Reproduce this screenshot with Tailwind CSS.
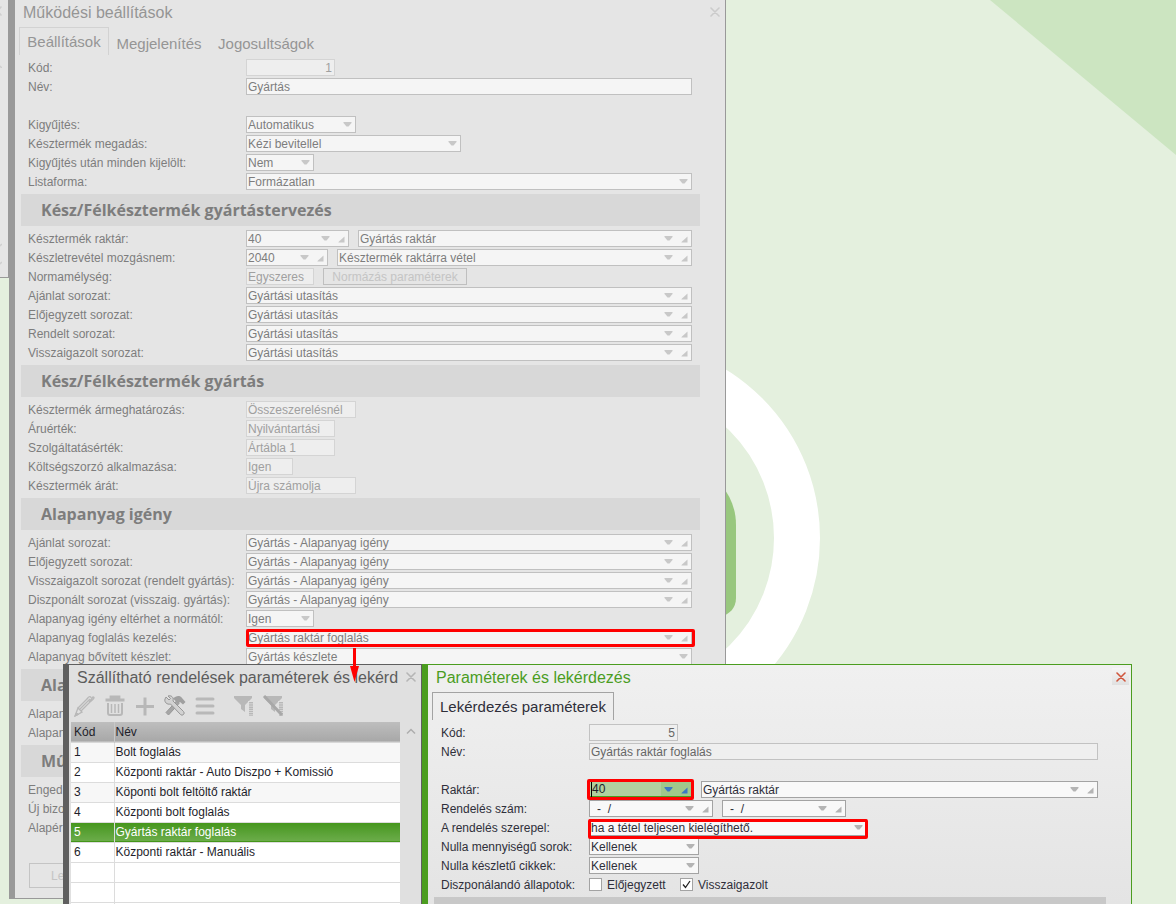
<!DOCTYPE html>
<html lang="hu">
<head>
<meta charset="utf-8">
<title>Működési beállítások</title>
<script src="https://cdn.jsdelivr.net/npm/@tailwindcss/browser@4"></script>
</head>
<body class="relative h-screen overflow-hidden bg-[#e4f0de] font-['Liberation_Sans',Arial,sans-serif] text-xs leading-4">

<!-- Icon sprite -->
<svg class="hidden" aria-hidden="true">
  <symbol id="down" viewBox="0 0 9 5"><path d="M0.500 0H8.500V1L5.500 4.500H3.500L0.500 1Z" fill="currentColor"/></symbol>
  <symbol id="corner" viewBox="0 0 7 7"><path d="M6.500 0.500V6.500H0.500V6Z" fill="currentColor"/></symbol>
  <symbol id="close" viewBox="0 0 10 10"><path d="M1 1L9 9M9 1L1 9" fill="none" stroke="currentColor" stroke-width="1.600" stroke-linecap="round"/></symbol>
</svg>

<!-- Wallpaper -->
<svg class="absolute top-0 left-0" width="1176" height="904" aria-hidden="true">
  <path d="M990 0H1176V155Z" fill="#cce5c1"/>
  <circle cx="622" cy="538" r="175" fill="none" stroke="#fff" stroke-width="46"/>
  <path d="M700 470C722 480 736 500 736 525V598C736 608 730 614 720 617H700Z" fill="#98c77e"/>
</svg>

<!-- Window behind, mostly off screen -->
<div class="absolute top-0 left-0 h-[278px] w-[9px] overflow-hidden border-r border-b border-[#999] bg-[#e5e5e5] text-[#cfcfcf]">
  <svg class="absolute top-1.5 -left-2" width="10" height="10"><use href="#close"/></svg>
  <svg class="absolute top-[63px] -left-[7px]" width="9" height="5" viewBox="0 0 9 5"><path d="M0 5L4.500 1L9 5" fill="none" stroke="currentColor" stroke-width="1.500"/></svg>
  <svg class="absolute top-[243px] -left-[7px]" width="9" height="5" viewBox="0 0 9 5"><path d="M0 5L4.500 5L9 1" fill="none" stroke="currentColor" stroke-width="1.500"/></svg>
  <svg class="absolute top-[261px] -left-[7px]" width="9" height="5" viewBox="0 0 9 5"><path d="M0 5L4.500 5L9 1" fill="none" stroke="currentColor" stroke-width="1.500"/></svg>
</div>

<!-- Main settings window -->
<section class="absolute -top-px left-[9px] w-[717px] overflow-hidden border border-l-6 border-[#999] bg-[#e5e5e5] pb-2.5 text-[#7d7d7d]">
  <header class="flex h-[27px] items-center justify-between pr-[5px] pb-0.5 pl-2">
    <h1 class="text-base text-[#959595]">Működési beállítások</h1>
    <button class="mb-0.5 text-[#cbcbcb]" aria-label="Bezárás"><svg width="10" height="10"><use href="#close"/></svg></button>
  </header>
  <nav class="mb-[3px] ml-1 flex h-7 text-[15px] text-[#959595]">
    <button class="w-[90px] border border-b-0 border-[#d2d2d2] whitespace-nowrap">Beállítások</button>
    <button class="w-[100px] pt-1.5 whitespace-nowrap">Megjelenítés</button>
    <button class="w-[114px] pt-1.5 whitespace-nowrap">Jogosultságok</button>
  </nav>
  <form class="pr-[25px] pl-1.5">
    <div class="flex h-[19px] items-center pr-2 pl-[7px]"><label for="kod" class="w-[218px]">Kód:</label>
      <input id="kod" value="1" disabled class="h-[17px] w-[89px] border border-[#d4d4d4] bg-[#eeeeee] px-0.5 text-right text-[#a0a0a0]"></div>
    <div class="mb-[19px] flex h-[19px] items-center pr-2 pl-[7px]"><label for="nev" class="w-[218px]">Név:</label>
      <input id="nev" value="Gyártás" class="h-[17px] min-w-0 flex-1 border border-[#c0c0c0] bg-[#f5f5f5] px-px"></div>
    <div class="flex h-[19px] items-center pr-2 pl-[7px]"><label for="kigy" class="w-[218px]">Kigyűjtés:</label>
      <div class="flex h-[17px] w-[110px] items-center border border-[#c0c0c0] bg-[#f5f5f5] pr-[3px] pl-px"><select id="kigy" class="min-w-0 flex-1 appearance-none"><option>Automatikus</option></select><svg class="text-[#c8c8c8]" width="9" height="5"><use href="#down"/></svg></div></div>
    <div class="flex h-[19px] items-center pr-2 pl-[7px]"><label for="megadas" class="w-[218px]">Késztermék megadás:</label>
      <div class="flex h-[17px] w-[215px] items-center border border-[#c0c0c0] bg-[#f5f5f5] pr-[3px] pl-px"><select id="megadas" class="min-w-0 flex-1 appearance-none"><option>Kézi bevitellel</option></select><svg class="text-[#c8c8c8]" width="9" height="5"><use href="#down"/></svg></div></div>
    <div class="flex h-[19px] items-center pr-2 pl-[7px]"><label for="kijelolt" class="w-[218px]">Kigyűjtés után minden kijelölt:</label>
      <div class="flex h-[17px] w-[68px] items-center border border-[#c0c0c0] bg-[#f5f5f5] pr-[3px] pl-px"><select id="kijelolt" class="min-w-0 flex-1 appearance-none"><option>Nem</option></select><svg class="text-[#c8c8c8]" width="9" height="5"><use href="#down"/></svg></div></div>
    <div class="flex h-[19px] items-center pr-2 pl-[7px]"><label for="lista" class="w-[218px]">Listaforma:</label>
      <div class="flex h-[17px] flex-1 items-center border border-[#c0c0c0] bg-[#f5f5f5] pr-[3px] pl-px"><select id="lista" class="min-w-0 flex-1 appearance-none"><option>Formázatlan</option></select><svg class="text-[#c8c8c8]" width="9" height="5"><use href="#down"/></svg></div></div>

    <h2 class="my-[3px] flex h-8 items-center bg-[#d8d8d8] pl-5 font-['Open_Sans',sans-serif] text-base font-bold">Kész/Félkésztermék gyártástervezés</h2>
    <div class="flex h-[19px] items-center pr-2 pl-[7px]"><label for="raktar" class="w-[218px]">Késztermék raktár:</label>
      <div class="flex h-[17px] w-[103px] items-center gap-2 border border-[#c0c0c0] bg-[#f5f5f5] pr-[3px] pl-px text-[#c8c8c8]"><input id="raktar" value="40" class="min-w-0 flex-1 text-[#7d7d7d]"><svg width="9" height="5"><use href="#down"/></svg><svg class="mt-0.5" width="7" height="7"><use href="#corner"/></svg></div>
      <div class="ml-[9px] flex h-[17px] flex-1 items-center gap-2 border border-[#c0c0c0] bg-[#f5f5f5] pr-[3px] pl-px text-[#c8c8c8]"><input aria-label="Késztermék raktár neve" value="Gyártás raktár" class="min-w-0 flex-1 text-[#7d7d7d]"><svg width="9" height="5"><use href="#down"/></svg><svg class="mt-0.5" width="7" height="7"><use href="#corner"/></svg></div></div>
    <div class="flex h-[19px] items-center pr-2 pl-[7px]"><label for="mozgas" class="w-[218px]">Készletrevétel mozgásnem:</label>
      <div class="flex h-[17px] w-[82px] items-center gap-2 border border-[#c0c0c0] bg-[#f5f5f5] pr-[3px] pl-px text-[#c8c8c8]"><input id="mozgas" value="2040" class="min-w-0 flex-1 text-[#7d7d7d]"><svg width="9" height="5"><use href="#down"/></svg><svg class="mt-0.5" width="7" height="7"><use href="#corner"/></svg></div>
      <div class="ml-[9px] flex h-[17px] flex-1 items-center gap-2 border border-[#c0c0c0] bg-[#f5f5f5] pr-[3px] pl-px text-[#c8c8c8]"><input aria-label="Mozgásnem neve" value="Késztermék raktárra vétel" class="min-w-0 flex-1 text-[#7d7d7d]"><svg width="9" height="5"><use href="#down"/></svg><svg class="mt-0.5" width="7" height="7"><use href="#corner"/></svg></div></div>
    <div class="flex h-[19px] items-center pr-2 pl-[7px]"><label for="norma" class="w-[218px]">Normamélység:</label>
      <input id="norma" value="Egyszeres" disabled class="h-[17px] w-[68px] border border-[#d4d4d4] bg-[#eeeeee] px-px text-[#a0a0a0]">
      <button type="button" disabled class="ml-[9px] h-[17px] w-36 border border-[#bfbfbf] bg-[#e5e5e5] leading-none whitespace-nowrap text-[#c4c4c4]">Normázás paraméterek</button></div>
    <div class="flex h-[19px] items-center pr-2 pl-[7px]"><label for="s1" class="w-[218px]">Ajánlat sorozat:</label>
      <div class="flex h-[17px] flex-1 items-center gap-2 border border-[#c0c0c0] bg-[#f5f5f5] pr-[3px] pl-px text-[#c8c8c8]"><input id="s1" value="Gyártási utasítás" class="min-w-0 flex-1 text-[#7d7d7d]"><svg width="9" height="5"><use href="#down"/></svg><svg class="mt-0.5" width="7" height="7"><use href="#corner"/></svg></div></div>
    <div class="flex h-[19px] items-center pr-2 pl-[7px]"><label for="s2" class="w-[218px]">Előjegyzett sorozat:</label>
      <div class="flex h-[17px] flex-1 items-center gap-2 border border-[#c0c0c0] bg-[#f5f5f5] pr-[3px] pl-px text-[#c8c8c8]"><input id="s2" value="Gyártási utasítás" class="min-w-0 flex-1 text-[#7d7d7d]"><svg width="9" height="5"><use href="#down"/></svg><svg class="mt-0.5" width="7" height="7"><use href="#corner"/></svg></div></div>
    <div class="flex h-[19px] items-center pr-2 pl-[7px]"><label for="s3" class="w-[218px]">Rendelt sorozat:</label>
      <div class="flex h-[17px] flex-1 items-center gap-2 border border-[#c0c0c0] bg-[#f5f5f5] pr-[3px] pl-px text-[#c8c8c8]"><input id="s3" value="Gyártási utasítás" class="min-w-0 flex-1 text-[#7d7d7d]"><svg width="9" height="5"><use href="#down"/></svg><svg class="mt-0.5" width="7" height="7"><use href="#corner"/></svg></div></div>
    <div class="flex h-[19px] items-center pr-2 pl-[7px]"><label for="s4" class="w-[218px]">Visszaigazolt sorozat:</label>
      <div class="flex h-[17px] flex-1 items-center gap-2 border border-[#c0c0c0] bg-[#f5f5f5] pr-[3px] pl-px text-[#c8c8c8]"><input id="s4" value="Gyártási utasítás" class="min-w-0 flex-1 text-[#7d7d7d]"><svg width="9" height="5"><use href="#down"/></svg><svg class="mt-0.5" width="7" height="7"><use href="#corner"/></svg></div></div>

    <h2 class="my-[3px] flex h-8 items-center bg-[#d8d8d8] pl-5 font-['Open_Sans',sans-serif] text-base font-bold">Kész/Félkésztermék gyártás</h2>
    <div class="flex h-[19px] items-center pr-2 pl-[7px]"><label for="armeg" class="w-[218px]">Késztermék ármeghatározás:</label>
      <input id="armeg" value="Összeszerelésnél" disabled class="h-[17px] w-[110px] border border-[#d4d4d4] bg-[#eeeeee] px-px text-[#a0a0a0]"></div>
    <div class="flex h-[19px] items-center pr-2 pl-[7px]"><label for="aru" class="w-[218px]">Áruérték:</label>
      <input id="aru" value="Nyilvántartási" disabled class="h-[17px] w-[89px] border border-[#d4d4d4] bg-[#eeeeee] px-px text-[#a0a0a0]"></div>
    <div class="flex h-[19px] items-center pr-2 pl-[7px]"><label for="szolg" class="w-[218px]">Szolgáltatásérték:</label>
      <input id="szolg" value="Ártábla 1" disabled class="h-[17px] w-[89px] border border-[#d4d4d4] bg-[#eeeeee] px-px text-[#a0a0a0]"></div>
    <div class="flex h-[19px] items-center pr-2 pl-[7px]"><label for="szorzo" class="w-[218px]">Költségszorzó alkalmazása:</label>
      <input id="szorzo" value="Igen" disabled class="h-[17px] w-[47px] border border-[#d4d4d4] bg-[#eeeeee] px-px text-[#a0a0a0]"></div>
    <div class="flex h-[19px] items-center pr-2 pl-[7px]"><label for="arat" class="w-[218px]">Késztermék árát:</label>
      <input id="arat" value="Újra számolja" disabled class="h-[17px] w-[110px] border border-[#d4d4d4] bg-[#eeeeee] px-px text-[#a0a0a0]"></div>

    <h2 class="my-[3px] flex h-8 items-center bg-[#d8d8d8] pl-5 font-['Open_Sans',sans-serif] text-base font-bold">Alapanyag igény</h2>
    <div class="flex h-[19px] items-center pr-2 pl-[7px]"><label for="a1" class="w-[218px]">Ajánlat sorozat:</label>
      <div class="flex h-[17px] flex-1 items-center gap-2 border border-[#c0c0c0] bg-[#f5f5f5] pr-[3px] pl-px text-[#c8c8c8]"><input id="a1" value="Gyártás - Alapanyag igény" class="min-w-0 flex-1 text-[#7d7d7d]"><svg width="9" height="5"><use href="#down"/></svg><svg class="mt-0.5" width="7" height="7"><use href="#corner"/></svg></div></div>
    <div class="flex h-[19px] items-center pr-2 pl-[7px]"><label for="a2" class="w-[218px]">Előjegyzett sorozat:</label>
      <div class="flex h-[17px] flex-1 items-center gap-2 border border-[#c0c0c0] bg-[#f5f5f5] pr-[3px] pl-px text-[#c8c8c8]"><input id="a2" value="Gyártás - Alapanyag igény" class="min-w-0 flex-1 text-[#7d7d7d]"><svg width="9" height="5"><use href="#down"/></svg><svg class="mt-0.5" width="7" height="7"><use href="#corner"/></svg></div></div>
    <div class="flex h-[19px] items-center pr-2 pl-[7px]"><label for="a3" class="w-[218px] whitespace-nowrap">Visszaigazolt sorozat (rendelt gyártás):</label>
      <div class="flex h-[17px] flex-1 items-center gap-2 border border-[#c0c0c0] bg-[#f5f5f5] pr-[3px] pl-px text-[#c8c8c8]"><input id="a3" value="Gyártás - Alapanyag igény" class="min-w-0 flex-1 text-[#7d7d7d]"><svg width="9" height="5"><use href="#down"/></svg><svg class="mt-0.5" width="7" height="7"><use href="#corner"/></svg></div></div>
    <div class="flex h-[19px] items-center pr-2 pl-[7px]"><label for="a4" class="w-[218px] whitespace-nowrap">Diszponált sorozat (visszaig. gyártás):</label>
      <div class="flex h-[17px] flex-1 items-center gap-2 border border-[#c0c0c0] bg-[#f5f5f5] pr-[3px] pl-px text-[#c8c8c8]"><input id="a4" value="Gyártás - Alapanyag igény" class="min-w-0 flex-1 text-[#7d7d7d]"><svg width="9" height="5"><use href="#down"/></svg><svg class="mt-0.5" width="7" height="7"><use href="#corner"/></svg></div></div>
    <div class="flex h-[19px] items-center pr-2 pl-[7px]"><label for="a5" class="w-[218px] whitespace-nowrap">Alapanyag igény eltérhet a normától:</label>
      <div class="flex h-[17px] w-[68px] items-center border border-[#c0c0c0] bg-[#f5f5f5] pr-[3px] pl-px"><select id="a5" class="min-w-0 flex-1 appearance-none"><option>Igen</option></select><svg class="text-[#c8c8c8]" width="9" height="5"><use href="#down"/></svg></div></div>
    <div class="flex h-[19px] items-center pr-2 pl-[7px]"><label for="a6" class="w-[218px]">Alapanyag foglalás kezelés:</label>
      <div class="relative flex h-[17px] flex-1 items-center gap-2 border border-[#c0c0c0] bg-[#f5f5f5] pr-[3px] pl-px text-[#c8c8c8]"><input id="a6" value="Gyártás raktár foglalás" class="min-w-0 flex-1 text-[#7d7d7d]"><svg width="9" height="5"><use href="#down"/></svg><svg class="mt-0.5" width="7" height="7"><use href="#corner"/></svg>
        <div class="pointer-events-none absolute -top-px -right-1 -bottom-0.5 -left-px rounded-xs border-3 border-[#f00]"></div></div></div>
    <div class="flex h-[19px] items-center pr-2 pl-[7px]"><label for="a7" class="w-[218px]">Alapanyag bővített készlet:</label>
      <div class="flex h-[17px] flex-1 items-center border border-[#c0c0c0] bg-[#f5f5f5] pr-[3px] pl-px"><select id="a7" class="min-w-0 flex-1 appearance-none"><option>Gyártás készlete</option></select><svg class="text-[#c8c8c8]" width="9" height="5"><use href="#down"/></svg></div></div>

    <h2 class="my-[3px] flex h-8 items-center bg-[#d8d8d8] pl-5 font-['Open_Sans',sans-serif] text-base font-bold">Ala</h2>
    <p class="flex h-[19px] items-center pl-[7px]">Alapan</p>
    <p class="flex h-[19px] items-center pl-[7px]">Alapan</p>
    <h2 class="my-[3px] flex h-8 items-center bg-[#d8d8d8] pl-5 font-['Open_Sans',sans-serif] text-base font-bold">Mű</h2>
    <p class="flex h-[19px] items-center pl-[7px]">Enged</p>
    <p class="flex h-[19px] items-center pl-[7px]">Új bizo</p>
    <p class="flex h-[19px] items-center pl-[7px]">Alapér</p>
    <button type="button" disabled class="mt-[26px] ml-2 block h-[25px] w-24 border border-[#c4c4c4] pl-[21px] text-left text-[#c4c4c4]">Le</button>
  </form>
</section>

<!-- List window -->
<section class="absolute top-[664px] bottom-0 left-[63px] w-[359px] overflow-hidden border border-b-0 border-l-6 border-[#5f5f5f] bg-[#e0e0e0] text-[#1e1e2a]">
  <header class="flex h-[27px] items-center justify-between gap-2 pr-[5px] pb-0.5 pl-2">
    <h1 class="min-w-0 flex-1 overflow-hidden text-base whitespace-nowrap text-[#5c5c5c]">Szállítható rendelések paraméterek és lekérdezés</h1>
    <button class="mb-0.5 text-[#b5b5b5]" aria-label="Bezárás"><svg width="10" height="10"><use href="#close"/></svg></button>
  </header>
  <div class="flex h-[30px] items-center gap-2 pb-0.5 pl-[5px] text-[#b8b8b8]">
    <button aria-label="Szerkesztés"><svg width="22" height="22" viewBox="0 0 22 22" fill="none" stroke="currentColor"><path d="M4 13L14 3M7 16L18 5M5.500 14.500L16 4" stroke-width="1.300"/><path d="M13 4C15 1 17 1 17 3M17 6C20 4 21 2 19 2L15 7" stroke-width="1.300"/><path d="M1 21L4 13L8 17Z" stroke-width="1.300"/><path d="M1 21L2.500 17.500L4.500 19.500Z" fill="currentColor"/></svg></button>
    <button aria-label="Törlés"><svg width="22" height="22" viewBox="0 0 22 22" fill="none" stroke="currentColor"><path d="M1.500 5H20.500M7 3.500V2H15V3.500" stroke-width="2.800"/><path d="M4 8V18Q4 20 6 20H16Q18 20 18 18V8" stroke-width="2"/><path d="M7.500 9V18M11 9V18M14.500 9V18" stroke-width="1.500"/></svg></button>
    <button aria-label="Új"><svg width="22" height="22" viewBox="0 0 22 22" fill="none" stroke="currentColor" stroke-width="3"><path d="M2 11.500H20M11 2.500V20.500"/></svg></button>
    <button aria-label="Eszközök" class="text-[#a6a6a6]"><svg width="22" height="22" viewBox="0 0 22 22"><path d="M12.500 6L2 17.500L4.500 20L15 8.500Z" fill="#a6a6a6" stroke="#989898"/><path d="M9 3.500C12 0.500 16 0 18 3L21.500 7L19 9.500L16 7L14 9L11 5.500Z" fill="#a0a0a0"/><path d="M2 2L5 5L6.500 3.500L4 1C7 0 10 2 9 6L19.500 16.500Q21 18 19.500 19.500Q18 21 16.500 19.500L6.500 9C3 10 0 7 1 4Z" fill="#d2d2d2" stroke="#979797"/></svg></button>
    <button aria-label="Menü"><svg width="22" height="22" viewBox="0 0 22 22" fill="none" stroke="currentColor" stroke-width="3" stroke-linecap="round"><path d="M3 4H19M3 11H19M3 18H19"/></svg></button>
    <button aria-label="Szűrő" class="ml-2"><svg width="22" height="22" viewBox="0 0 22 22"><path d="M2 1H20V3L13 10V17L9 14V10L2 3Z" fill="currentColor"/><path d="M19 6V21" stroke="#e0e0e0" stroke-width="6"/><path d="M19 7V21" stroke="currentColor" stroke-width="4" stroke-dasharray="1.500 0.700"/></svg></button>
    <button aria-label="Szűrő törlése"><svg width="22" height="22" viewBox="0 0 22 22"><path d="M2 1H20V3L13 10V17L9 14V10L2 3Z" fill="currentColor"/><path d="M19 6V21" stroke="#e0e0e0" stroke-width="6"/><path d="M19 7V21" stroke="currentColor" stroke-width="4" stroke-dasharray="1.500 0.700"/><path d="M2 1L20 20" stroke="#a8a8a8" stroke-width="3"/></svg></button>
  </div>
  <div class="flex">
    <table class="ml-0.5 min-w-0 flex-1 table-fixed border-collapse bg-white text-left">
      <thead><tr class="h-5 border-b border-[#d8d8d8] bg-linear-to-b from-[#bebebe] to-[#a8a8a8]"><th class="w-[43px] border-r border-[#c8c8c8] p-0 pl-[3px] font-normal">Kód</th><th class="p-0 pl-px font-normal">Név</th></tr></thead>
      <tbody>
        <tr class="h-5 border-b border-[#dcdcdc] bg-[#f7f7f7]"><td class="border-r border-[#dcdcdc] p-0 pl-[3px]">1</td><td class="p-0 pl-px">Bolt foglalás</td></tr>
        <tr class="h-5 border-b border-[#dcdcdc]"><td class="border-r border-[#dcdcdc] p-0 pl-[3px]">2</td><td class="p-0 pl-px">Központi raktár - Auto Diszpo + Komissió</td></tr>
        <tr class="h-5 border-b border-[#dcdcdc] bg-[#f7f7f7]"><td class="border-r border-[#dcdcdc] p-0 pl-[3px]">3</td><td class="p-0 pl-px">Köponti bolt feltöltő raktár</td></tr>
        <tr class="h-5 border-b border-[#dcdcdc]"><td class="border-r border-[#dcdcdc] p-0 pl-[3px]">4</td><td class="p-0 pl-px">Központi bolt foglalás</td></tr>
        <tr class="h-5 border-b border-[#dcdcdc] bg-linear-to-b from-[#439517] to-[#6bac49] text-white"><td class="border-r border-[#dcdcdc] p-0 pl-[3px]">5</td><td class="p-0 pl-px">Gyártás raktár foglalás</td></tr>
        <tr class="h-5 border-b border-[#dcdcdc]"><td class="border-r border-[#dcdcdc] p-0 pl-[3px]">6</td><td class="p-0 pl-px">Központi raktár - Manuális</td></tr>
        <tr class="h-5 border-b border-[#dcdcdc]"><td class="border-r border-[#dcdcdc] p-0"></td><td class="p-0"></td></tr>
        <tr class="h-5 border-b border-[#dcdcdc]"><td class="border-r border-[#dcdcdc] p-0"></td><td class="p-0"></td></tr>
        <tr class="h-5 border-b border-[#dcdcdc]"><td class="border-r border-[#dcdcdc] p-0"></td><td class="p-0"></td></tr>
      </tbody>
    </table>
    <div class="flex w-[21px] justify-center pt-1.5"><svg width="10" height="6" viewBox="0 0 10 6"><path d="M1 5.500L5 1.500L9 5.500" fill="none" stroke="#aeaeae" stroke-width="1.500"/></svg></div>
  </div>
</section>

<!-- Parameters window -->
<section class="absolute top-[664px] bottom-0 left-[422px] w-[710px] overflow-hidden border border-b-0 border-l-6 border-[#4b9d1f] bg-linear-to-b from-[#f0f0f0] to-[#e4e4e4] text-[#2f2f3a]">
  <header class="flex h-[27px] items-center justify-between pr-0.5 pb-0.5 pl-2">
    <h1 class="text-base text-[#4b9d1f]">Paraméterek és lekérdezés</h1>
    <button class="mb-0.5 flex size-[17px] items-center justify-center bg-linear-to-b from-[#f5f5f5] to-[#e0e0e0] text-[#d0553c]" aria-label="Bezárás"><svg width="10" height="10"><use href="#close"/></svg></button>
  </header>
  <nav class="mb-[3px] ml-1 flex h-7 text-[15px]">
    <button class="w-[182px] border border-b-0 border-[#a3a3a3] whitespace-nowrap">Lekérdezés paraméterek</button>
  </nav>
  <form class="pr-[25px] pl-1.5">
    <div class="flex h-[19px] items-center pr-2 pl-[7px]"><label for="pkod" class="w-[148px]">Kód:</label>
      <input id="pkod" value="5" disabled class="h-[17px] w-[89px] border border-[#c2c2c2] bg-[#efefef] px-0.5 text-right text-[#666]"></div>
    <div class="mb-[19px] flex h-[19px] items-center pr-2 pl-[7px]"><label for="pnev" class="w-[148px]">Név:</label>
      <input id="pnev" value="Gyártás raktár foglalás" disabled class="h-[17px] min-w-0 flex-1 border border-[#c2c2c2] bg-[#efefef] px-px text-[#666]"></div>
    <div class="flex h-[19px] items-center pr-2 pl-[7px]"><label for="praktar" class="w-[148px]">Raktár:</label>
      <div class="relative flex h-[17px] w-[103px] items-center gap-2 border border-b-2 border-[#4b9d1f] bg-linear-to-r from-[#b1d09f] from-70% to-[#a0c88b] to-70% pr-[3px] pl-px text-[#3b79c4]"><input id="praktar" value="40" class="min-w-0 flex-1 border-l border-black text-[#1e1e2a]"><svg width="9" height="5"><use href="#down"/></svg><svg class="mt-0.5" width="7" height="7"><use href="#corner"/></svg>
        <div class="pointer-events-none absolute -top-[3px] -right-[3px] -bottom-1 -left-[3px] rounded-xs border-3 border-[#f00]"></div></div>
      <div class="ml-[9px] flex h-[17px] flex-1 items-center gap-2 border border-[#a3a3a3] bg-[#f8f8f8] pr-[3px] pl-px text-[#b4b4b4]"><input aria-label="Raktár neve" value="Gyártás raktár" class="min-w-0 flex-1 text-[#2f2f3a]"><svg width="9" height="5"><use href="#down"/></svg><svg class="mt-0.5" width="7" height="7"><use href="#corner"/></svg></div></div>
    <div class="flex h-[19px] items-center pr-2 pl-[7px]"><label for="rsz" class="w-[148px]">Rendelés szám:</label>
      <div class="flex h-[17px] w-[124px] items-center gap-2 border border-[#a3a3a3] bg-[#f8f8f8] pr-[3px] pl-[7px] text-[#b4b4b4]"><input id="rsz" value="-  /" class="min-w-0 flex-1 text-[#2f2f3a]"><svg width="9" height="5"><use href="#down"/></svg><svg class="mt-0.5" width="7" height="7"><use href="#corner"/></svg></div>
      <div class="ml-[9px] flex h-[17px] w-[124px] items-center gap-2 border border-[#a3a3a3] bg-[#f8f8f8] pr-[3px] pl-[7px] text-[#b4b4b4]"><input aria-label="Rendelés szám vége" value="-  /" class="min-w-0 flex-1 text-[#2f2f3a]"><svg width="9" height="5"><use href="#down"/></svg><svg class="mt-0.5" width="7" height="7"><use href="#corner"/></svg></div></div>
    <div class="flex h-[19px] items-center pr-2 pl-[7px]"><label for="szerepel" class="w-[148px]">A rendelés szerepel:</label>
      <div class="relative flex h-[17px] w-[278px] items-center border border-[#a3a3a3] bg-[#f8f8f8] pr-[3px] pl-px"><select id="szerepel" class="min-w-0 flex-1 appearance-none"><option>ha a tétel teljesen kielégíthető.</option></select><svg class="text-[#b4b4b4]" width="9" height="5"><use href="#down"/></svg>
        <div class="pointer-events-none absolute -top-px -right-0.5 -bottom-1 -left-0.5 rounded-xs border-3 border-[#f00]"></div></div></div>
    <div class="flex h-[19px] items-center pr-2 pl-[7px]"><label for="nsor" class="w-[148px]">Nulla mennyiségű sorok:</label>
      <div class="flex h-[17px] w-[110px] items-center border border-[#a3a3a3] bg-[#f8f8f8] pr-[3px] pl-px"><select id="nsor" class="min-w-0 flex-1 appearance-none"><option>Kellenek</option></select><svg class="text-[#b4b4b4]" width="9" height="5"><use href="#down"/></svg></div></div>
    <div class="flex h-[19px] items-center pr-2 pl-[7px]"><label for="ncikk" class="w-[148px]">Nulla készletű cikkek:</label>
      <div class="flex h-[17px] w-[110px] items-center border border-[#a3a3a3] bg-[#f8f8f8] pr-[3px] pl-px"><select id="ncikk" class="min-w-0 flex-1 appearance-none"><option>Kellenek</option></select><svg class="text-[#b4b4b4]" width="9" height="5"><use href="#down"/></svg></div></div>
    <div class="flex h-[19px] items-center pr-2 pl-[7px]"><span class="w-[148px]">Diszponálandó állapotok:</span>
      <label class="flex w-[91px] items-center gap-[5px]"><input type="checkbox" class="size-[13px] appearance-none border border-[#a3a3a3] bg-white">Előjegyzett</label>
      <label class="flex items-center gap-[5px]"><span class="grid"><input type="checkbox" checked class="col-start-1 row-start-1 size-[13px] appearance-none border border-[#a3a3a3] bg-white"><svg class="pointer-events-none col-start-1 row-start-1" width="13" height="13" viewBox="0 0 13 13"><path d="M3 6.500L5.500 9.500L10 3" fill="none" stroke="#222" stroke-width="1.300"/></svg></span>Visszaigazolt</label></div>
    <div class="mt-[3px] h-[7px] bg-[#c8c8c8]"></div>
  </form>
</section>

<!-- Arrow from the highlighted field to the list window -->
<svg class="absolute top-[648px] left-[349px]" width="11" height="35" viewBox="0 0 11 35" aria-hidden="true"><path d="M4 0H7V18H10L5.500 34L1 18H4Z" fill="#f00"/></svg>
</body>
</html>
